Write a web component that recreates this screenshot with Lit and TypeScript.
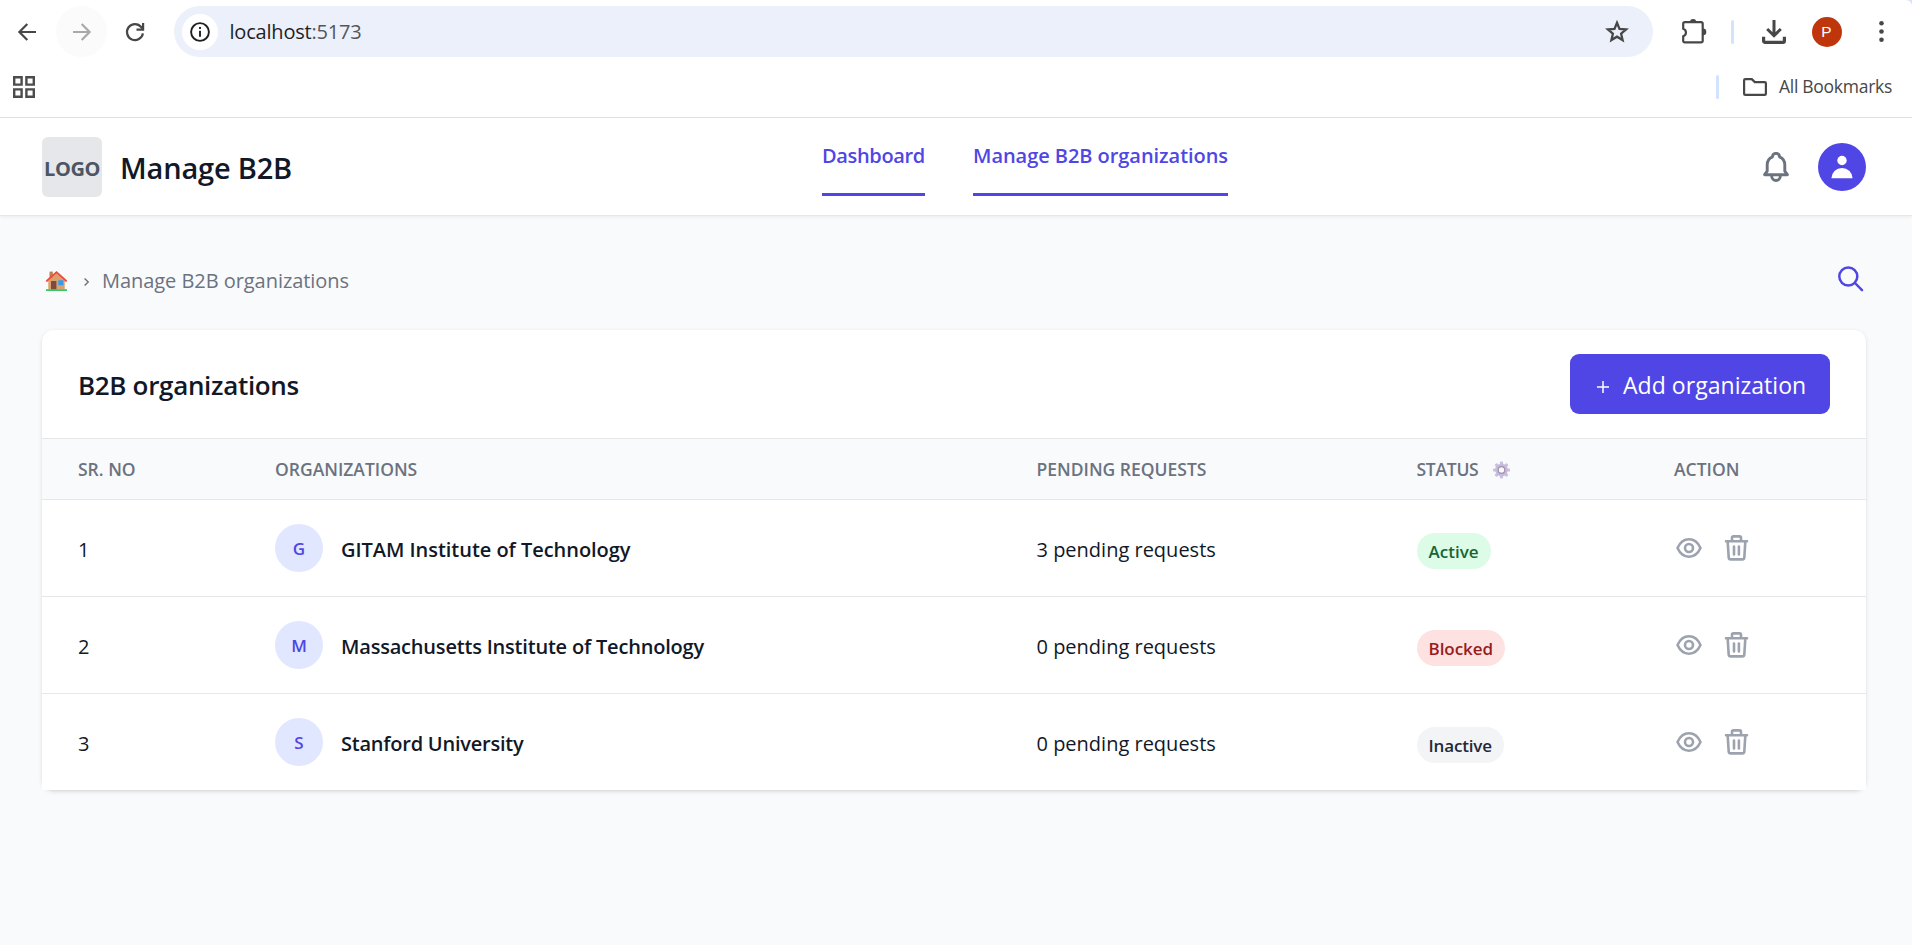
import { LitElement, html, css, svg } from "lit";
import { customElement, property } from "lit/decorators.js";
import { classMap } from "lit/directives/class-map.js";

@customElement("browser-chrome")
class BrowserChrome extends LitElement {
  static styles = css`
    :host { display: block; background: #d3e3fd; color: #474747; }
    svg { display: block; flex: none; overflow: visible; }
    .frame { background: #fff; border-top-right-radius: 6px; border-bottom: 1px solid #dfe0e2; height: 117px; }
    .bar { display: flex; align-items: center; height: 51px; padding: 6px 28.5px 0 18px; }
    .forward { width: 51px; height: 51px; border-radius: 50%; background: #fbfbfb; display: grid; place-items: center; margin: 0 19px 0 20px; color: #a9a9a9; flex: none; }
    .omnibox { flex: 1; height: 51px; box-sizing: border-box; margin-left: 30px; border-radius: 26px; background: #ebf0fa; display: flex; align-items: center; padding: 0 24px 0 8px; }
    .site { width: 36px; height: 36px; border-radius: 50%; background: #fff; display: grid; place-items: center; color: #1f1f1f; }
    .url { flex: 1; margin-left: 11.5px; font-size: 20px; line-height: 30px; letter-spacing: -0.2px; color: #1f1f1f; padding-top: 1px; }
    .port { color: #54565a; }
    .puzzle { margin-left: 29px; }
    .rule { width: 3px; height: 24px; border-radius: 2px; background: #d3e3fd; margin: 0 28px 0 24px; flex: none; }
    .profile { width: 30px; height: 30px; border-radius: 50%; background: #c0360c; color: #fff; font: 15.5px/30px "Liberation Sans", sans-serif; text-align: center; margin: 0 37px 0 26px; flex: none; }
    .bookmarks { display: flex; align-items: center; height: 60px; padding: 0 20px 0 13px; }
    .bookmarks .rule { margin: 0 24px 0 auto; }
    .all { font-size: 17.5px; line-height: 26px; letter-spacing: -0.28px; margin-left: 12px; padding-bottom: 2px; color: #474747; }
  `;
  render() {
    return html`
      <div class="frame">
        <div class="bar">
          <svg width="18" height="18" fill="none" stroke="currentColor" stroke-width="2.2"><path d="M18 9H2M9.3 1 1.4 9l7.9 8"/></svg>
          <div class="forward"><svg width="18" height="18" fill="none" stroke="currentColor" stroke-width="2.2"><path d="M0 9h16M8.7 1l7.9 8-7.9 8"/></svg></div>
          <svg width="18" height="18" fill="none" stroke="#474747" stroke-width="2.2"><path d="M16.9 10.3A8 8 0 1 1 15.2 4L17 6"/><path d="M17.1 0v6.6h-6.6"/></svg>
          <div class="omnibox">
            <div class="site"><svg width="20" height="20" fill="none" stroke="currentColor" stroke-width="1.9"><circle cx="10" cy="10" r="8.9"/><path d="M10 8.8v6M10 5v2.1"/></svg></div>
            <div class="url">localhost<span class="port">:5173</span></div>
            <svg width="24" height="24" fill="none" stroke="#474747" stroke-width="2.3" stroke-linejoin="miter"><path d="M12 2.8l2.5 6.1 6.6.5-5 4.3 1.5 6.4L12 16.700l-5.600 3.400 1.500-6.400-5-4.300 6.600-.5z"/></svg>
          </div>
          <svg class="puzzle" width="25" height="25" fill="none" stroke="#474747" stroke-width="2.2"><path d="M3.200 3.200H19.200a1.500 1.500 0 0 1 1.500 1.500V21.900a1.500 1.500 0 0 1-1.500 1.500H2.700a1.500 1.500 0 0 1-1.500-1.500V17.300a4 4 0 0 0 0-7.600V4.700a1.500 1.500 0 0 1 1.500-1.500z"/><path fill="#474747" stroke="none" d="M8 3.200a3.100 3.100 0 0 1 6.200 0zM21 9.600a3.300 3.300 0 0 1 0 6.600z"/></svg>
          <div class="rule"></div>
          <svg width="24" height="24" fill="none" stroke="#474747" stroke-width="3"><path d="M12 0v15.500M5.200 9l6.800 6.700L18.800 9"/><path stroke-width="3.200" d="M1.600 16.800V21a1.400 1.400 0 0 0 1.400 1.400H21a1.400 1.400 0 0 0 1.400-1.400V16.800"/></svg>
          <div class="profile">P</div>
          <svg width="5" height="21" fill="#474747"><circle cx="2.500" cy="2.300" r="2.300"/><circle cx="2.500" cy="10.500" r="2.300"/><circle cx="2.500" cy="18.700" r="2.300"/></svg>
        </div>
        <div class="bookmarks">
          <svg width="22" height="22" fill="none" stroke="#4c4c4c" stroke-width="2.400"><path d="M1.200 1.200h7.400v7.400H1.200zM13.400 1.200h7.400v7.400h-7.400zM1.200 13.400h7.400v7.400H1.200zM13.400 13.400h7.400v7.400h-7.400z"/></svg>
          <div class="rule"></div>
          <svg width="24" height="18" fill="none" stroke="#474747" stroke-width="2.200"><path d="M2.300 1.100H8.800l3 3H21.700a1.200 1.200 0 0 1 1.200 1.200V15.700a1.200 1.200 0 0 1-1.200 1.200H2.300a1.200 1.200 0 0 1-1.200-1.200V2.300a1.200 1.200 0 0 1 1.200-1.200z"/></svg>
          <div class="all">All Bookmarks</div>
        </div>
      </div>`;
  }
}

@customElement("app-header")
class AppHeader extends LitElement {
  static styles = css`
    :host { display: block; }
    svg { display: block; }
    header { display: flex; height: 97px; padding: 0 46px 0 42px; background: #fff; border-bottom: 1px solid #e5e7eb; box-shadow: 0 1.5px 3px rgba(0, 0, 0, 0.05); }
    .brand { display: flex; align-items: center; width: 780px; gap: 18px; padding-top: 1px; }
    .logo { width: 60px; height: 60px; border-radius: 6px; background: #e5e7eb; color: #4b5563; display: grid; place-items: center; font-size: 20px; font-weight: 700; line-height: 60px; letter-spacing: -0.4px; }
    .logo span { padding-top: 3px; line-height: 28px; }
    .name { font-size: 29px; font-weight: 600; letter-spacing: -0.19px; line-height: 40px; padding-top: 2px; }
    nav { display: flex; gap: 48px; align-items: flex-start; padding-top: 23px; }
    a { color: #4f46e5; font-size: 20px; font-weight: 600; line-height: 30px; padding-bottom: 22px; border-bottom: 3px solid #4f46e5; white-space: nowrap; letter-spacing: -0.05px; }
    .first { letter-spacing: -0.34px; }
    .actions { margin-left: auto; display: flex; align-items: center; gap: 29px; padding-top: 1px; }
    .user { width: 48px; height: 48px; border-radius: 50%; background: #4f46e5; display: grid; place-items: center; }
  `;
  render() {
    return html`
      <header>
        <div class="brand"><div class="logo"><span>LOGO</span></div><div class="name">Manage B2B</div></div>
        <nav><a class="first">Dashboard</a><a>Manage B2B organizations</a></nav>
        <div class="actions">
          <svg width="26" height="30" fill="none" stroke="#6b7280" stroke-width="2.900" stroke-linejoin="round" stroke-linecap="round"><path d="M1.600 22.700H24.400L21.800 19.200V12.800c0-4-2-6.600-5.300-8C16.500.2 9.500.2 9.500 4.800c-3.300 1.400-5.300 4-5.300 8V19.200z"/><path d="M8.600 23.500c0 6.600 8.800 6.600 8.800 0"/></svg>
          <div class="user"><svg width="22" height="24" fill="#fff"><circle cx="11" cy="5.500" r="4.700"/><path d="M.4 23.300a10.600 10.400 0 0 1 21.200 0z"/></svg></div>
        </div>
      </header>`;
  }
}

interface Org { no: number; name: string; spacing: string; pending: string; status: string; }

const eye = svg`<path d="M1.500 10C6.800-1.600 19.200-1.600 24.500 10 19.200 21.600 6.800 21.600 1.500 10z"/><circle cx="13" cy="10" r="4"/>`;
const trash = svg`<path d="M1 6.300H22M2.700 6.800l1 15.800a2 2 0 0 0 2 1.800H17.300a2 2 0 0 0 2-1.800l1-15.800M7 5.800V2.900a1.500 1.500 0 0 1 1.500-1.500h6a1.500 1.500 0 0 1 1.500 1.500V5.800"/><path d="M9 11.500v8M13.900 11.500v8"/>`;

@customElement("org-row")
class OrgRow extends LitElement {
  @property({ attribute: false }) org!: Org;
  static styles = css`
    :host { display: block; background: #fff; }
    svg { display: block; overflow: visible; }
    .row { display: grid; grid-template-columns: 197px 761.5px 380px 257.5px 1fr; height: 96px; padding-left: 36px; align-items: center; font-size: 20px; line-height: 30px; color: #111827; }
    .no, .pending { padding-top: 4px; }
    .org { display: flex; align-items: center; gap: 18px; }
    .initial { width: 48px; height: 48px; border-radius: 50%; background: #e0e7ff; color: #4f46e5; font-size: 17px; font-weight: 600; line-height: 49px; text-align: center; }
    .name { font-weight: 600; padding-top: 4px; }
    .gitam { letter-spacing: -0.04px; }
    .mit { letter-spacing: -0.2px; }
    .stanford { letter-spacing: -0.23px; }
    .pill { display: inline-block; font-size: 17px; font-weight: 600; line-height: 38px; height: 36px; padding: 0 12px; border-radius: 18px; margin-top: 6px; }
    .active { background: #dcfce7; color: #166534; }
    .blocked { background: #fee2e2; color: #991b1b; letter-spacing: -0.06px; }
    .inactive { background: #f3f4f6; color: #1f2937; letter-spacing: -0.15px; }
    .status { display: flex; }
    .actions { display: flex; align-items: center; gap: 23px; padding-left: 2px; fill: none; stroke: #9ca3af; stroke-width: 2.6; stroke-linecap: round; stroke-linejoin: round; }
  `;
  render() {
    const o = this.org;
    return html`
      <div class="row">
        <div class="no">${o.no}</div>
        <div class="org"><div class="initial">${o.name[0]}</div><div class=${"name " + o.spacing}>${o.name}</div></div>
        <div class="pending">${o.pending}</div>
        <div class="status"><span class=${classMap({ pill: true, [o.status.toLowerCase()]: true })}>${o.status}</span></div>
        <div class="actions"><svg width="26" height="20">${eye}</svg><svg width="23" height="26">${trash}</svg></div>
      </div>`;
  }
}

@customElement("app-root")
class AppRoot extends LitElement {
  static styles = css`
    :host { display: flex; flex-direction: column; height: 945px; overflow: hidden; background: #f9fafb; color: #111827; font-family: "Open Sans", "Noto Sans", sans-serif; }
    svg { display: block; overflow: visible; }
    main { padding: 50px 46px 0 42px; }
    .crumbs { display: flex; align-items: center; height: 26px; padding: 0 2px 0 4px; margin-bottom: 38px; color: #6b7280; }
    .sep { width: 5px; margin: 5px 13px 0 17px; }
    .here { flex: 1; font-size: 20px; line-height: 30px; letter-spacing: -0.05px; padding-top: 3px; }
    .house { margin-top: 4px; }
    .card { border-radius: 12px; background: #fff; box-shadow: 0 1.5px 4.5px rgba(0, 0, 0, 0.1), 0 1.5px 3px -1.5px rgba(0, 0, 0, 0.1); }
    .top { display: flex; align-items: center; justify-content: space-between; height: 108px; padding: 0 36px; border-bottom: 1px solid #e5e7eb; }
    h2 { margin: 0; font-size: 26px; font-weight: 600; line-height: 36px; letter-spacing: -0.32px; padding-top: 2px; }
    button { display: flex; align-items: center; height: 60px; width: 260px; border: 0; border-radius: 9px; background: #4f46e5; color: #fff; font: 400 23px/32px "Open Sans", sans-serif; letter-spacing: 0.04px; padding: 1px 0 0 27px; gap: 14px; white-space: nowrap; }
    .plus { margin-top: 4px; }
    .head { display: grid; grid-template-columns: 197px 761.5px 380px 257.5px 1fr; align-items: center; height: 60px; padding-left: 36px; background: #f9fafb; border-bottom: 1px solid #e5e7eb; color: #6b7280; font-size: 17.5px; font-weight: 600; line-height: 26px; }
    .head span { padding-top: 0; }
    .status { display: flex; align-items: center; gap: 15px; letter-spacing: -0.27px; }
    .gear { margin-top: 1px; }
    org-row + org-row { border-top: 1px solid #e5e7eb; }
  `;
  orgs: Org[] = [
    { no: 1, name: "GITAM Institute of Technology", spacing: "gitam", pending: "3 pending requests", status: "Active" },
    { no: 2, name: "Massachusetts Institute of Technology", spacing: "mit", pending: "0 pending requests", status: "Blocked" },
    { no: 3, name: "Stanford University", spacing: "stanford", pending: "0 pending requests", status: "Inactive" },
  ];
  render() {
    const teeth = [0, 45, 90, 135, 180, 225, 270, 315];
    return html`
      <browser-chrome></browser-chrome>
      <app-header></app-header>
      <main>
        <div class="crumbs">
          <svg class="house" width="21" height="20" viewBox="0 0 21 20"><path fill="#b98054" d="M3.500.6H6.800V7H3.500z"/><path fill="#dca06c" d="M2.300 10 10.500 2.400 18.700 10V18.600H2.300z"/><path fill="#7b4b42" d="M5 10h5.400v8.600H5z"/><path fill="#2f9df0" d="M12.300 9.300h5v4.900h-5z"/><path fill="none" stroke="#e8503c" stroke-width="2.100" stroke-linecap="round" d="M1 9.800 10.500 1.300 20 9.800"/><path fill="#38c768" d="M0 18.200h21V20H0z"/></svg>
          <svg class="sep" width="5" height="8" fill="none" stroke="#6b7280" stroke-width="1.400"><path d="M.6.600 4.200 4 .6 7.400"/></svg>
          <span class="here">Manage B2B organizations</span>
          <svg width="26" height="26" fill="none" stroke="#4f46e5" stroke-width="2.500" stroke-linecap="round"><circle cx="10.300" cy="10.500" r="9"/><path d="M17 17l7 7.200"/></svg>
        </div>
        <section class="card">
          <div class="top">
            <h2>B2B organizations</h2>
            <button><svg class="plus" width="12" height="12" stroke="#fff" stroke-width="1.500"><path d="M6 0v12M0 6h12"/></svg>Add organization</button>
          </div>
          <div class="head">
            <span>SR. NO</span><span>ORGANIZATIONS</span><span>PENDING REQUESTS</span>
            <span class="status">STATUS
              <svg class="gear" width="17" height="18" viewBox="-9 -9 18 18"><g fill="#cdbfdf">${teeth.map((a) => svg`<rect x="-1.700" y="-9" width="3.400" height="4.500" rx="1" transform="rotate(${a})"/>`)}</g><circle r="4.900" fill="none" stroke="#c8bbda" stroke-width="3.600"/><circle r="3.500" fill="none" stroke="#a093b2" stroke-width="1.300"/></svg>
            </span>
            <span>ACTION</span>
          </div>
          ${this.orgs.map((o) => html`<org-row .org=${o}></org-row>`)}
        </section>
      </main>`;
  }
}
